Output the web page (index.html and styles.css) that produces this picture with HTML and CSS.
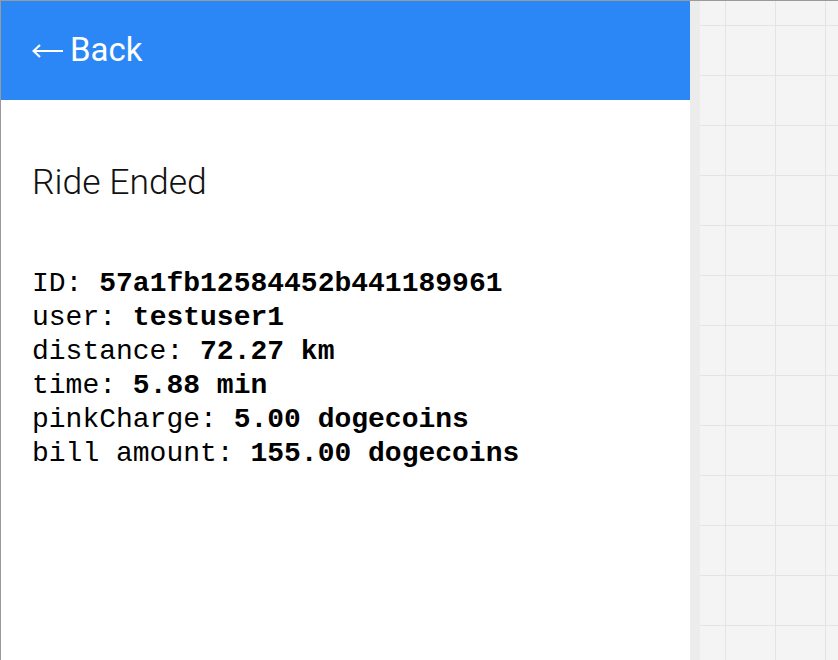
FILE: index.html
```html
<!DOCTYPE html>
<html>
<head>
<meta charset="utf-8">
<link rel="stylesheet" href="styles.css">
</head>
<body>
<div class="app">
  <div class="panel">
    <header class="bar">
      <a class="back"><svg class="arrow" width="31" height="14" viewBox="0 0 31 14" aria-hidden="true"><path d="M1 7H31M8 1L1.5 7L8 13" fill="none" stroke="#fff" stroke-width="2.2"/></svg><span>Back</span></a>
    </header>
    <main class="content">
      <h1 class="title">Ride Ended</h1>
      <div class="details">
        <div>ID: <b>57a1fb12584452b441189961</b></div>
        <div>user: <b>testuser1</b></div>
        <div>distance: <b>72.27 km</b></div>
        <div>time: <b>5.88 min</b></div>
        <div>pinkCharge: <b>5.00 dogecoins</b></div>
        <div>bill amount: <b>155.00 dogecoins</b></div>
      </div>
    </main>
  </div>
  <div class="strip"></div>
  <div class="canvas"></div>
</div>
</body>
</html>
```
FILE: styles.css
```css
html, body {
  margin: 0;
  padding: 0;
  height: 100%;
}
body {
  border-top: 1px solid #9a9a9a;
  box-sizing: border-box;
  background: #f4f4f4;
}
.app {
  display: flex;
  height: 659px;
  overflow: hidden;
}
.panel {
  width: 689px;
  flex: none;
  border-left: 1px solid #9a9a9a;
  background: #fff;
  display: flex;
  flex-direction: column;
}
.bar {
  background: #2b87f5;
  height: 99px;
  display: flex;
  align-items: center;
  padding-left: 31px;
}
.back {
  color: #fff;
  font-family: Roboto, "Noto Sans", sans-serif;
  font-size: 33px;
  display: flex;
  align-items: center;
  gap: 7px;
  padding-bottom: 2px;
}
.arrow {
  display: block;
  margin-top: 2px;
}
.content {
  padding: 0 31px;
}
.title {
  margin: 58px 0 0;
  font-family: Roboto, sans-serif;
  font-weight: 300;
  font-size: 35.5px;
  line-height: 48px;
  color: #111;
}
.details {
  margin-top: 61px;
  font-family: "Liberation Mono", "Courier New", monospace;
  font-size: 28px;
  line-height: 34px;
  color: #000;
}
.details b {
  font-weight: 700;
}
.strip {
  width: 10px;
  flex: none;
  background: #ececec;
}
.canvas {
  flex: 1;
  background-color: #f4f4f4;
  background-image:
    linear-gradient(to right, #e4e4e4 1px, transparent 1px),
    linear-gradient(to bottom, #e4e4e4 1px, transparent 1px);
  background-size: 50px 50px;
  background-position: 25px 24px;
}
```
